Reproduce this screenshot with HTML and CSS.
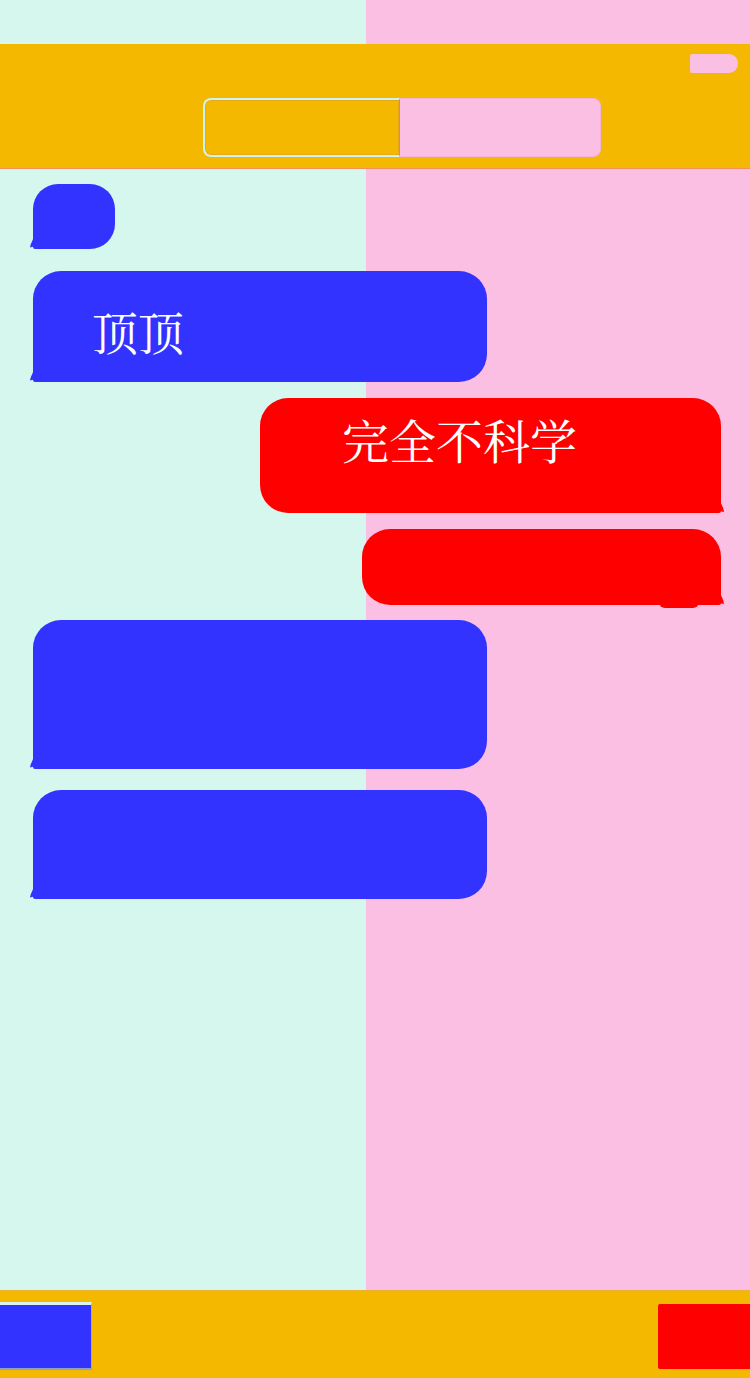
FILE: index.html
```html
<!DOCTYPE html>
<html lang="zh-CN">
<head>
<meta charset="utf-8">
<title>Chat</title>
<link rel="stylesheet" href="styles.css">
</head>
<body>
<div class="page">
  <div class="status"></div>
  <header class="header">
    <div class="header-top"><span class="pill"></span></div>
    <div class="segmented">
      <span class="seg seg-left"></span>
      <span class="seg seg-right"></span>
    </div>
  </header>
  <main class="chat">
    <div class="bubble in b1"></div>
    <div class="bubble in b2"><span class="text t2">顶顶</span></div>
    <div class="bubble out b3"><span class="text t3">完全不科学</span></div>
    <div class="bubble out b4"><span class="bump"></span></div>
    <div class="bubble in b5"></div>
    <div class="bubble in b6"></div>
  </main>
  <footer class="footer">
    <span class="tab tab-blue"></span>
    <span class="tab tab-red"></span>
  </footer>
</div>
</body>
</html>
```

FILE: styles.css
```css
* { box-sizing: border-box; }
html, body { margin: 0; padding: 0; }
body {
  font-family: "Noto Serif CJK SC", "Noto Sans CJK SC", serif;
}
.page {
  width: 750px;
  height: 1378px;
  display: flex;
  flex-direction: column;
  background: linear-gradient(to right, #d5f7ee 0, #d5f7ee 366px, #fbbfe4 366px, #fbbfe4 100%);
  overflow: hidden;
}
.status { height: 44px; flex: none; }
.header {
  height: 125px;
  flex: none;
  background: #f5b800;
  border-bottom: 1px solid #f29060;
  display: flex;
  flex-direction: column;
}
.header-top {
  height: 54px;
  display: flex;
  justify-content: flex-end;
  padding: 10px 12px 0 0;
}
.pill {
  width: 48px;
  height: 19px;
  background: #fbbfe4;
  border-radius: 2px 9px 9px 2px;
}
.segmented {
  width: 398px;
  height: 59px;
  margin-left: 203px;
  display: flex;
}
.seg { flex: none; height: 100%; }
.seg-left {
  width: 197px;
  background: #f5b800;
  border: 2px solid #cff3ef;
  border-right: 1px solid #e8902a;
  border-radius: 8px 0 0 8px;
  box-shadow: inset 0 0 0 1px #eaa818;
}
.seg-right {
  width: 201px;
  background: #fbbfe4;
  border: 1px solid #f0b4d8;
  border-left: none;
  border-radius: 0 8px 8px 0;
}
.chat {
  flex: 1;
  display: flex;
  flex-direction: column;
  padding: 15px 29px 0 33px;
}
.bubble {
  position: relative;
  border-radius: 28px;
  flex: none;
}
.bubble.in {
  align-self: flex-start;
  background: #3333ff;
  border-bottom-left-radius: 2px;
}
.bubble.out {
  align-self: flex-end;
  background: #ff0000;
  border-bottom-right-radius: 2px;
}
.bubble.in::before {
  content: "";
  position: absolute;
  left: -3px;
  bottom: 0;
  width: 34px;
  height: 10px;
  background: linear-gradient(#3333ff, #3333ff);
  clip-path: polygon(9% 0, 100% 0, 100% 100%, 45% 100%, 30% 80%, 12% 75%, 0 85%, 2% 55%);
}
.bubble.out::before {
  content: "";
  position: absolute;
  right: -3px;
  bottom: 0;
  width: 34px;
  height: 10px;
  background: #ff0000;
  clip-path: polygon(0 0, 91% 0, 98% 55%, 100% 90%, 85% 80%, 70% 80%, 55% 100%, 0 100%);
}
.bump {
  position: absolute;
  right: 22px;
  bottom: -3px;
  width: 40px;
  height: 6px;
  background: #ff0000;
  border-radius: 0 0 12px 12px;
}
.b1 { width: 82px; height: 65px; border-radius: 25px; border-bottom-left-radius: 2px; }
.b2 { width: 454px; height: 111px; margin-top: 22px; }
.b3 { width: 461px; height: 115px; margin-top: 16px; }
.b4 { width: 359px; height: 76px; margin-top: 16px; }
.b5 { width: 454px; height: 149px; margin-top: 15px; }
.b6 { width: 454px; height: 109px; margin-top: 21px; }
.text {
  display: block;
  color: #ffffff;
  font-size: 46px;
  line-height: 1;
  white-space: nowrap;
}
.t2 { padding: 36px 0 0 59px; }
.t3 { padding: 17px 0 0 82px; font-size: 47px; }
.footer {
  height: 88px;
  flex: none;
  background: #f5b800;
  border-top: 1px solid #eeb030;
  display: flex;
  justify-content: space-between;
  align-items: flex-start;
  padding-top: 11px;
}
.tab { display: block; width: 92px; }
.tab-blue {
  height: 68px;
  background: #3333ff;
  border-top: 3px solid #d8f4ee;
  border-bottom: 2px solid #8aa0c8;
  border-right: 1px solid #9aa6d8;
}
.tab-red {
  height: 65px;
  margin-top: 2px;
  background: #ff0000;
  border-radius: 2px 0 0 2px;
}
```
